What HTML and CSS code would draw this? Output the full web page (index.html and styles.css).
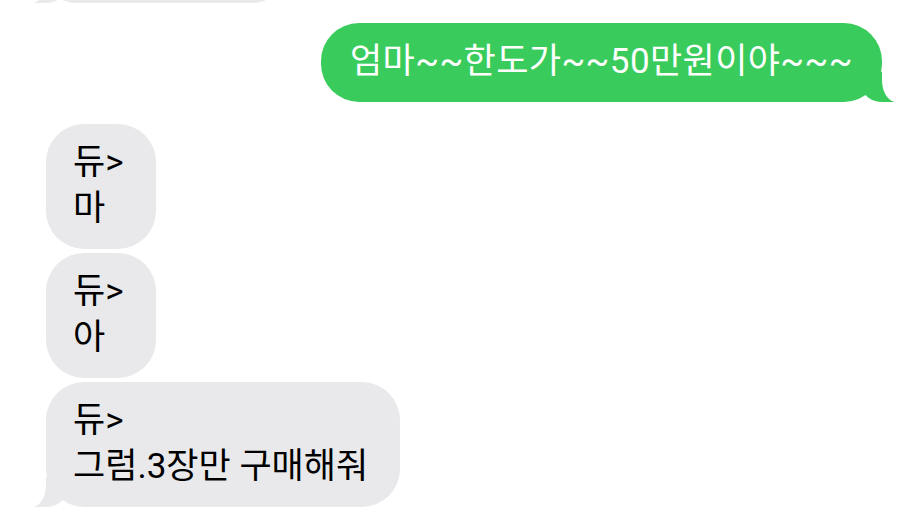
FILE: index.html
```html
<!DOCTYPE html>
<html lang="ko">
<head>
  <meta charset="UTF-8">
  <meta name="viewport" content="width=device-width, initial-scale=1.0">
  <title>메시지</title>
  <link rel="stylesheet" href="styles.css">
</head>
<body>
  <div class="thread">
    <!-- Previous message, scrolled mostly out of view -->
    <div class="bubble in tail cut"></div>

    <div class="bubble out tail">엄마~~한도가~~50만원이야~~~</div>

    <div class="group">
      <div class="bubble in">듀&gt;<br>마</div>
      <div class="bubble in">듀&gt;<br>아</div>
      <div class="bubble in tail">듀&gt;<br>그럼.3장만 구매해줘</div>
    </div>
  </div>
</body>
</html>
```

FILE: styles.css
```css
/* Reset */
* {
  margin: 0;
  padding: 0;
  box-sizing: border-box;
}

body {
  width: 922px;
  height: 508px;
  overflow: hidden;
  background: #fff;
  font-family: Roboto, "Noto Sans CJK KR", sans-serif;
}

/* Message list */
.thread {
  display: flex;
  flex-direction: column;
  align-items: flex-start;
  padding: 0 40px 0 46px;
}

.group {
  display: flex;
  flex-direction: column;
  align-items: flex-start;
  gap: 4px;
  margin-top: 22px;
}

/* Bubbles */
.bubble {
  position: relative;
  padding: 16px 32px 17px 27px;
  border-radius: 38px;
  font-size: 35px;
  line-height: 46px;
  white-space: nowrap;
}

.in {
  background-color: #e9e9eb;
  color: #000;
}

.out {
  align-self: flex-end;
  margin-top: 20px;
  padding-left: 29px;
  padding-right: 29px;
  background-color: #39cc5c;
  color: #fff;
  letter-spacing: 0.4px;
}

/* Partly hidden bubble at the top edge */
.cut {
  width: 237px;
  height: 60px;
  margin-top: -57px;
}

/* Bubble tails */
.tail::before,
.tail::after {
  content: "";
  position: absolute;
  bottom: 0;
  height: 30px;
}

.in.tail::before {
  left: -12px;
  width: 32px;
  background-color: #e9e9eb;
  border-bottom-right-radius: 20px 16px;
}

.in.tail::after {
  left: -32px;
  width: 32px;
  background-color: #fff;
  border-bottom-right-radius: 14px 22px;
}

.out.tail::before {
  right: -12px;
  width: 32px;
  background-color: #39cc5c;
  border-bottom-left-radius: 20px 16px;
}

.out.tail::after {
  right: -32px;
  width: 32px;
  background-color: #fff;
  border-bottom-left-radius: 14px 22px;
}
```
